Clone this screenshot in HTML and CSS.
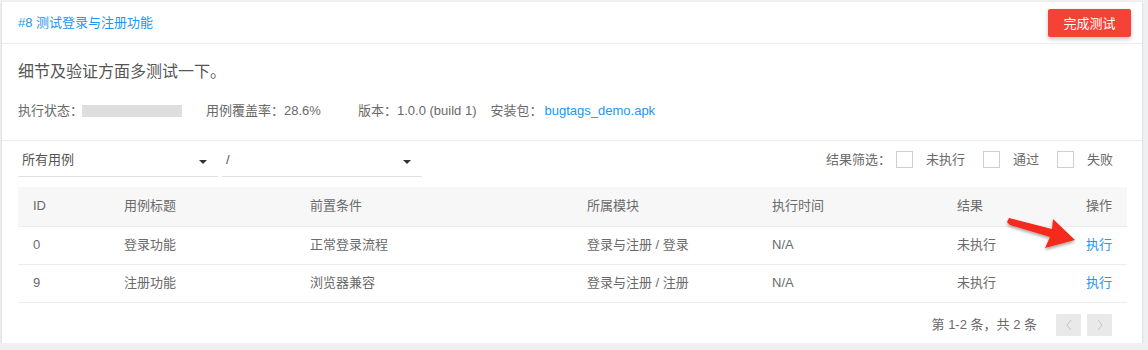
FILE: index.html
```html
<!DOCTYPE html>
<html lang="zh-CN">
<head>
<meta charset="utf-8">
<title>测试登录与注册功能</title>
<link rel="stylesheet" href="styles.css">
</head>
<body>
<div class="card">
  <div class="card-header">
    <a class="title">#8 测试登录与注册功能</a>
    <button class="btn-finish">完成测试</button>
  </div>
  <div class="summary">
    <p class="desc">细节及验证方面多测试一下。</p>
    <div class="info">
      <span class="item">执行状态：<span class="bar"></span></span>
      <span class="item cover">用例覆盖率：28.6%</span>
      <span class="item version">版本：1.0.0 (build 1)</span>
      <span class="item">安装包：<a class="link">bugtags_demo.apk</a></span>
    </div>
  </div>
  <div class="list">
    <div class="filters">
      <div class="select">所有用例<span class="caret"></span></div>
      <div class="select">/<span class="caret"></span></div>
      <div class="result-filter">
        <span class="flabel">结果筛选：</span>
        <span class="check"></span><span class="clabel">未执行</span>
        <span class="check"></span><span class="clabel">通过</span>
        <span class="check"></span><span class="clabel">失败</span>
      </div>
    </div>
    <table class="cases">
      <colgroup>
        <col class="c-id"><col class="c-title"><col class="c-pre"><col class="c-mod"><col class="c-time"><col class="c-res"><col>
      </colgroup>
      <thead>
        <tr><th>ID</th><th>用例标题</th><th>前置条件</th><th>所属模块</th><th>执行时间</th><th>结果</th><th class="op">操作</th></tr>
      </thead>
      <tbody>
        <tr><td>0</td><td>登录功能</td><td>正常登录流程</td><td>登录与注册 / 登录</td><td>N/A</td><td>未执行</td><td class="op"><a class="link">执行</a></td></tr>
        <tr><td>9</td><td>注册功能</td><td>浏览器兼容</td><td>登录与注册 / 注册</td><td>N/A</td><td>未执行</td><td class="op"><a class="link">执行</a></td></tr>
      </tbody>
    </table>
    <div class="pager">
      <span class="count">第 1-2 条，共 2 条</span>
      <span class="pbtn"><svg width="10" height="14" viewBox="0 0 10 14"><path d="M7 2 L3 7 L7 12" fill="none" stroke="#c4c4c4" stroke-width="1"/></svg></span>
      <span class="pbtn"><svg width="10" height="14" viewBox="0 0 10 14"><path d="M3 2 L7 7 L3 12" fill="none" stroke="#c4c4c4" stroke-width="1"/></svg></span>
    </div>
  </div>
  <svg class="arrow" width="90" height="48" viewBox="0 0 90 48">
    <defs>
      <filter id="sh" x="-20%" y="-20%" width="140%" height="160%">
        <feDropShadow dx="0" dy="2" stdDeviation="1.5" flood-color="#000" flood-opacity="0.35"/>
      </filter>
    </defs>
    <polygon filter="url(#sh)" fill="#f5291a" points="7,8 50,19 51,9 73,30 43,38 48,27 8,15 5,12"/>
  </svg>
</div>
</body>
</html>
```
FILE: styles.css
```css
* { box-sizing: border-box; }
html, body { margin: 0; padding: 0; }
body {
  background: #eff0f2;
  font-family: "Liberation Sans", "Noto Sans CJK SC", sans-serif;
  font-size: 13px;
  color: #6a6a6a;
  padding: 2px 6px 0 2px;
}
.card {
  position: relative;
  background: #fff;
  height: 341px;
  box-shadow: 0 1px 2px rgba(0,0,0,0.18);
}
.card-header {
  height: 42px;
  border-bottom: 1px solid #eceef0;
  display: flex;
  align-items: center;
  justify-content: space-between;
  padding: 0 11px 0 16px;
}
.title { color: #2196f3; font-size: 13px; line-height: 20px; }
.btn-finish {
  width: 83px;
  height: 28px;
  border: 0;
  border-radius: 2px;
  background: #f44336;
  color: #fff;
  font-family: inherit;
  font-size: 13px;
  box-shadow: 0 2px 4px rgba(0,0,0,0.25);
  padding: 0;
}
.summary {
  padding: 17px 16px 19px;
  border-bottom: 1px solid #eceef0;
}
.desc {
  margin: 0;
  font-size: 16px;
  line-height: 22px;
  color: #555;
}
.info {
  margin-top: 18px;
  display: flex;
  align-items: center;
  line-height: 20px;
  gap: 24px;
}
.item { display: flex; align-items: center; }
.cover { width: 128px; }
.version { margin-right: -10px; }
.bar {
  display: inline-block;
  width: 100px;
  height: 12px;
  background: #dedede;
  margin-left: -1px;
}
.link { color: #2196f3; }
.info .link { margin-left: 2px; }
.list { padding: 0 15px 0 16px; }
.filters {
  display: flex;
  align-items: center;
  height: 36px;
}
.select {
  position: relative;
  width: 200px;
  height: 36px;
  padding: 10px 0 0 4px;
  line-height: 18px;
  color: #555;
  border-bottom: 1px solid #e0e0e0;
  margin-right: 4px;
}
.caret {
  position: absolute;
  right: 11px;
  top: 19px;
  width: 0; height: 0;
  border-left: 4px solid transparent;
  border-right: 4px solid transparent;
  border-top: 4px solid #333;
}
.result-filter {
  margin-left: auto;
  display: flex;
  align-items: center;
  padding-right: 14px;
  padding-top: 1px;
  line-height: 20px;
}
.flabel { margin-right: 5px; }
.check {
  width: 17px;
  height: 17px;
  border: 1px solid #cfcfcf;
  margin-right: 13px;
}
.clabel { margin-right: 18px; }
.clabel:last-child { margin-right: 0; }
.cases {
  margin-top: 10px;
  width: 100%;
  border-collapse: collapse;
  table-layout: fixed;
}
.c-id { width: 91px; }
.c-title { width: 186px; }
.c-pre { width: 277px; }
.c-mod { width: 185px; }
.c-time { width: 185px; }
.c-res { width: 120px; }
.cases th, .cases td {
  text-align: left;
  font-weight: normal;
  padding: 0 15px;
  line-height: 20px;
  border-bottom: 1px solid #ececec;
  white-space: nowrap;
}
.cases thead th { background: #f7f7f7; height: 39px; }
.cases td { height: 38px; }
.cases .op { text-align: right; }
.pager {
  display: flex;
  align-items: center;
  justify-content: flex-end;
  margin-top: 11px;
  padding-right: 15px;
  gap: 6px;
}
.count { margin-right: 13px; line-height: 20px; }
.pbtn {
  width: 25px;
  height: 22px;
  background: #e9e9e9;
  border-radius: 1px;
  display: flex;
  align-items: center;
  justify-content: center;
}
.arrow {
  position: absolute;
  left: 1000px;
  top: 208px;
}
```
